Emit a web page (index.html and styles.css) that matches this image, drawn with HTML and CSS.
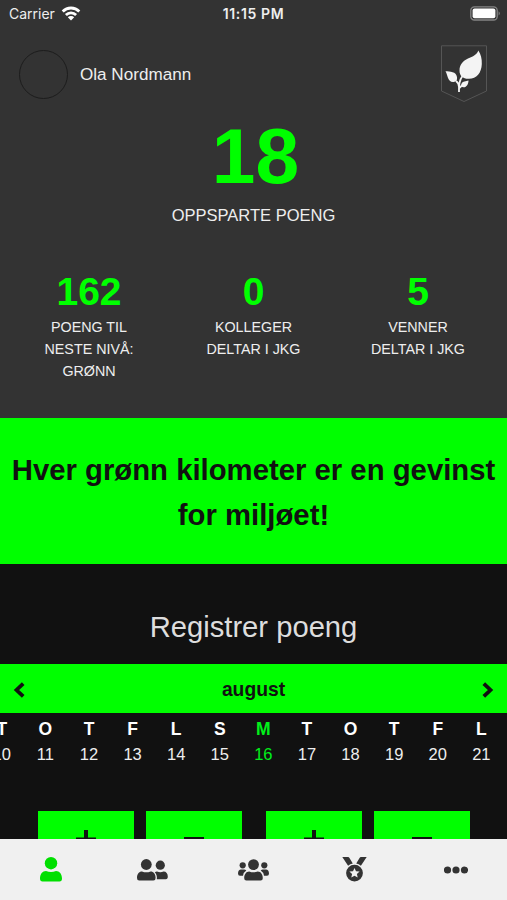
FILE: index.html
```
<!DOCTYPE html>
<html lang="no">
<head>
    <meta charset="utf-8">
    <title>Registrer poeng</title>
    <link rel="stylesheet" href="styles.css">
</head>
<body>
    <div class="app">
        <div class="top">
            <div class="statusbar">
                <div class="carrier">
                    <span>Carrier</span>
                    <svg width="20" height="15" viewBox="0 0 20 15">
                        <path d="M1.700 5.400a11.800 11.800 0 0 1 16.600 0M4.900 9a7.200 7.200 0 0 1 10.200 0" fill="none" stroke="#fff" stroke-width="2.8"/>
                        <path d="M10 14.500l-3.200-3.200a4.600 4.600 0 0 1 6.400 0z" fill="#fff"/>
                    </svg>
                </div>
                <div class="clock">11:15 PM</div>
                <div class="battery">
                    <svg width="31" height="15" viewBox="0 0 31 15">
                        <rect x=".8" y=".8" width="26.4" height="13.2" rx="3.6" fill="none" stroke="#858585" stroke-width="1.3"/>
                        <rect x="2.600" y="2.600" width="22.800" height="9.600" rx="2" fill="#fff"/>
                        <path d="M28.600 5.200q2.400 2.200 0 4.400z" fill="#858585"/>
                    </svg>
                </div>
            </div>

            <div class="profile">
                <div class="avatar"></div>
                <div class="name">Ola Nordmann</div>
                <svg class="badge" width="46" height="58" viewBox="0 0 46 58">
                    <path d="M.5 46V.8h45V46L23 56.5z" fill="none" stroke="#555" stroke-width="1"/>
                    <path d="M37.300 5.500C40 9 41 14 40.800 19C40.500 28 35.500 33.800 28 33.800C22 34 18.500 31 18.500 25.500C18.500 19.500 22 16 27 13.500C32 11.500 36 9.500 37.300 5.500z" fill="#f4f4f4"/>
                    <path d="M4.500 26.300C9 26.300 15.200 26.800 16 32C16.500 36.500 14 37 12 37C6.500 37 6.800 30 4.500 26.300z" fill="#f4f4f4"/>
                    <path d="M27.500 35.500C27.500 39 25.500 42.500 22.500 42.300C20.500 42 19.700 40.500 20.500 38.700C21.700 36 25 36.500 27.500 35.500z" fill="#f4f4f4"/>
                    <path d="M21.500 31Q17.500 36 18 47M15 36Q17.800 38 18 42M18.300 43L21.500 40" fill="none" stroke="#f4f4f4" stroke-width="1.8"/>
                </svg>
            </div>

            <div class="total">18</div>
            <div class="total-label">OPPSPARTE POENG</div>

            <div class="stats">
                <div class="stat">
                    <div class="number">162</div>
                    <div class="label">POENG TIL<br>NESTE NIVÅ:<br>GRØNN</div>
                </div>
                <div class="stat">
                    <div class="number">0</div>
                    <div class="label">KOLLEGER<br>DELTAR I JKG</div>
                </div>
                <div class="stat">
                    <div class="number">5</div>
                    <div class="label">VENNER<br>DELTAR I JKG</div>
                </div>
            </div>
        </div>

        <div class="banner">Hver grønn kilometer er en gevinst<br>for miljøet!</div>

        <div class="register">
            <h1>Registrer poeng</h1>
            <div class="month">
                <svg width="12" height="16" viewBox="0 0 12 16"><path d="M10.200 1.600L3.500 8l6.700 6.400" /></svg>
                <span>august</span>
                <svg width="12" height="16" viewBox="0 0 12 16"><path d="M1.800 1.600L8.500 8l-6.700 6.400" /></svg>
            </div>
            <div class="days">
                <div class="day"><b>T</b>10</div>
                <div class="day"><b>O</b>11</div>
                <div class="day"><b>T</b>12</div>
                <div class="day"><b>F</b>13</div>
                <div class="day"><b>L</b>14</div>
                <div class="day"><b>S</b>15</div>
                <div class="day active"><b>M</b>16</div>
                <div class="day"><b>T</b>17</div>
                <div class="day"><b>O</b>18</div>
                <div class="day"><b>T</b>19</div>
                <div class="day"><b>F</b>20</div>
                <div class="day"><b>L</b>21</div>
            </div>
            <div class="counters">
                <div class="counter">
                    <div class="btn"><svg width="20" height="20" viewBox="0 0 20 20"><path d="M10 0v20M0 9.500h20"/></svg></div>
                    <div class="btn"><svg width="20" height="20" viewBox="0 0 20 20"><path d="M0 9h20"/></svg></div>
                </div>
                <div class="counter">
                    <div class="btn"><svg width="20" height="20" viewBox="0 0 20 20"><path d="M10 0v20M0 9.500h20"/></svg></div>
                    <div class="btn"><svg width="20" height="20" viewBox="0 0 20 20"><path d="M0 9h20"/></svg></div>
                </div>
            </div>
        </div>

        <div class="tabbar">
            <div class="tab active">
                <svg width="22" height="25" viewBox="0 0 22 25">
                    <circle cx="11" cy="6.200" r="6.200"/>
                    <path d="M0 21.500c0-4.500 2.500-7.500 6-7.500q5 2 10 0c3.500 0 6 3 6 7.500q0 3-2.500 3h-17q-2.500 0-2.500-3z"/>
                </svg>
            </div>
            <div class="tab">
                <svg width="31" height="22" viewBox="0 0 31 22">
                    <circle cx="9.300" cy="5.500" r="5.400"/>
                    <path d="M0 19c0-4 2-6.500 5-6.500q4.300 1.700 8.600 0c3 0 5 2.500 5 6.500q0 2.600-2.200 2.600H2.200Q0 21.600 0 19z"/>
                    <circle cx="23.300" cy="6.200" r="4.600"/>
                    <path d="M17.800 13.200q1-.7 2.200-.7 3.300 1.300 6.600 0c2.600 0 4.200 2 4.200 5q0 2.800-2 2.800h-9q.600-4.300-2-7.100z"/>
                </svg>
            </div>
            <div class="tab">
                <svg width="31" height="22" viewBox="0 0 31 22">
                    <circle cx="4.700" cy="6.300" r="3.100"/>
                    <circle cx="26.300" cy="6.300" r="3.100"/>
                    <circle cx="15.500" cy="5.600" r="5.400"/>
                    <path d="M6.200 19.300c0-4 2-6.800 5-6.800q4.300 1.700 8.600 0c3 0 5 2.800 5 6.800q0 2.300-2.200 2.300H8.400q-2.200 0-2.200-2.300z"/>
                    <path d="M0 14.500c0-2.500 1.300-3.900 3-3.900h3.200q1.200 0 2.100 1-2.700 1.600-3.300 5.200H2q-2 0-2-2.300zM31 14.500c0-2.500-1.300-3.900-3-3.900h-3.200q-1.200 0-2.100 1 2.700 1.600 3.300 5.200h3q2 0 2-2.300z"/>
                </svg>
            </div>
            <div class="tab">
                <svg width="25" height="25" viewBox="0 0 25 25">
                    <path d="M.300 0h5.800q.8 0 1.200.7l3.500 5.800q-2.700.500-4.700 2.200zM24.700 0h-5.800q-.8 0-1.200.7l-3.500 5.800q2.700.500 4.700 2.200z"/>
                    <path fill-rule="evenodd" d="M12.500 7.700a8.400 8.400 0 1 0 0 16.800 8.400 8.400 0 1 0 0-16.800zM12.500 11l1.500 3.200 3.600.400-2.700 2.400.8 3.500-3.200-1.800-3.200 1.800.8-3.500-2.700-2.400 3.600-.4z"/>
                </svg>
            </div>
            <div class="tab">
                <svg width="24" height="8" viewBox="0 0 24 8">
                    <circle cx="3.500" cy="4" r="3.600"/>
                    <circle cx="12" cy="4" r="3.600"/>
                    <circle cx="20.500" cy="4" r="3.600"/>
                </svg>
            </div>
        </div>
    </div>
</body>
</html>
```
FILE: styles.css
```
* {
    box-sizing: border-box;
}

body {
    margin: 0;
    background-color: #111;
    font-family: "Liberation Sans", Arial, sans-serif;
    color: #eee;
}

svg {
    display: block;
}

.app {
    display: flex;
    flex-direction: column;
    height: 900px;
    overflow: hidden;
}

.top {
    flex: none;
    height: 418px;
    background-color: #333;
    text-align: center;
}

.statusbar {
    display: grid;
    grid-template-columns: 1fr auto 1fr;
    align-items: center;
    height: 27px;
    padding: 0 5px 0 9px;
    font-family: Inter, Roboto, sans-serif;
    font-size: 14px;
}

.carrier {
    display: flex;
    align-items: center;
    gap: 6px;
}

.clock {
    padding-right: 4px;
    font-weight: 600;
    letter-spacing: .65px;
}

.battery {
    display: flex;
    justify-content: flex-end;
    margin-right: 1px;
}

.profile {
    display: flex;
    align-items: center;
    height: 94px;
    padding: 0 20px 0 19px;
}

.avatar {
    width: 49px;
    height: 49px;
    margin-right: 12px;
    border: 1px solid #1c1c1c;
    border-radius: 50%;
}

.name {
    flex: 1;
    padding-top: 1px;
    font-size: 17.1px;
    text-align: left;
}

.total {
    height: 74px;
    padding-left: 4px;
    font-size: 78.5px;
    font-weight: bold;
    line-height: 71px;
    color: #00ff00;
}

.total-label {
    margin-top: 9px;
    font-size: 16.5px;
    line-height: 22px;
}

.stats {
    display: grid;
    grid-template-columns: repeat(3, 164.5px);
    justify-content: center;
    margin-top: 43px;
}

.number {
    height: 48px;
    font-size: 39px;
    font-weight: bold;
    line-height: 46px;
    color: #00ff00;
}

.label {
    font-size: 14.3px;
    line-height: 21.8px;
}

.banner {
    flex: none;
    height: 146px;
    padding-top: 30px;
    background-color: #00ff00;
    color: #111;
    font-size: 29.3px;
    font-weight: bold;
    line-height: 44.5px;
    text-align: center;
    white-space: nowrap;
}

.register {
    flex: 1;
    min-height: 0;
    overflow: hidden;
}

h1 {
    margin: 0;
    padding-top: 43px;
    height: 100px;
    color: #ddd;
    font-size: 29.2px;
    font-weight: normal;
    line-height: 40px;
    text-align: center;
}

.month {
    display: flex;
    justify-content: space-between;
    align-items: center;
    height: 49px;
    padding: 2px 13px 0;
    background-color: #00ff00;
    color: #111;
    font-size: 19.3px;
    font-weight: bold;
}

.month path {
    fill: none;
    stroke: #111;
    stroke-width: 3.8;
}

.days {
    display: grid;
    grid-template-columns: repeat(12, 43.6px);
    margin-left: -20px;
    padding-top: 4px;
}

.day {
    font-size: 16.5px;
    line-height: 25px;
    text-align: center;
}

.day b {
    display: block;
    color: #fff;
    font-size: 17.5px;
}

.day.active,
.day.active b {
    color: #00f01a;
}

.counters {
    display: flex;
    justify-content: center;
    gap: 24px;
    margin-top: 44px;
}

.counter {
    display: flex;
    gap: 12px;
}

.btn {
    display: flex;
    justify-content: center;
    width: 96px;
    height: 60px;
    padding-top: 19px;
    background-color: #00ff00;
}

.btn path {
    stroke: #111;
    stroke-width: 4;
}

.tabbar {
    flex: none;
    display: grid;
    grid-template-columns: repeat(5, 1fr);
    height: 61px;
    background-color: #f0f0f0;
}

.tab {
    display: flex;
    justify-content: center;
    align-items: center;
    fill: #333;
}

.tab.active {
    fill: #00df00;
}
```
